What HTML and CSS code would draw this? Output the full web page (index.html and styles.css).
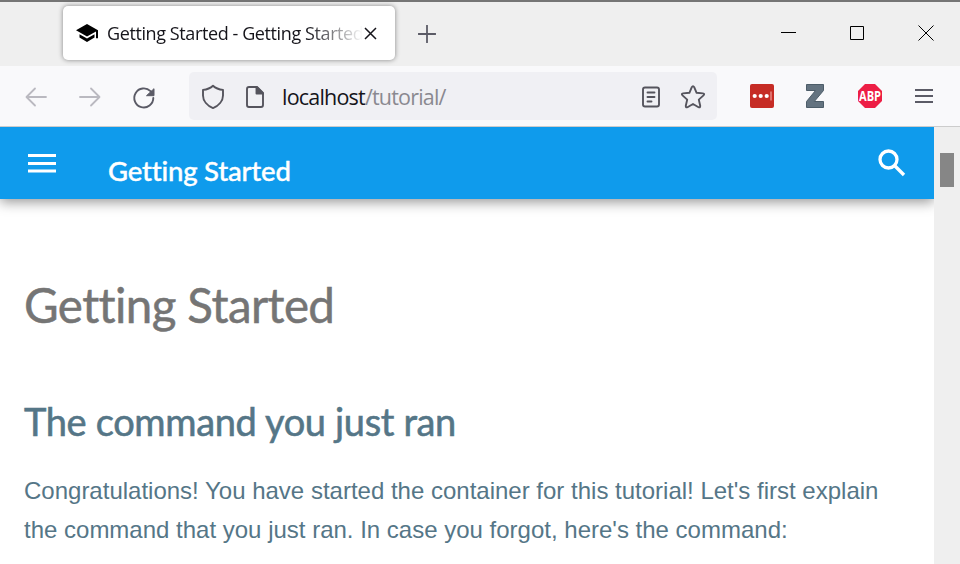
FILE: index.html
```
<!DOCTYPE html>
<html lang="en">
<head>
<meta charset="utf-8">
<title>Getting Started</title>
<link rel="stylesheet" href="styles.css">
</head>
<body>
<div class="window">
  <div class="tabs">
    <div class="tab">
      <svg class="cap" width="24" height="22" viewBox="0 0 24 22"><path d="M1 8.2 12 2l11 6.2v8h-2V9.6L12 14.400z"/><path d="M4.500 12.200v3.400L12 20l7.500-4.400v-3.400L12 16.500z"/></svg>
      <span class="tab-title">Getting Started - Getting Started</span>
      <svg class="tab-close" width="13" height="13" viewBox="0 0 13 13"><path d="M1 1l11 11M12 1L1 12"/></svg>
    </div>
    <svg class="plus" width="18" height="18" viewBox="0 0 18 18"><path d="M9 .5v17M.5 9h17"/></svg>
    <div class="controls">
      <svg width="16" height="16" viewBox="0 0 16 16"><path d="M0 7.500h15"/></svg>
      <svg width="14" height="14" viewBox="0 0 14 14"><path d="M.5.5h13v13H.5z"/></svg>
      <svg width="16" height="16" viewBox="0 0 16 16"><path d="M.5.5l15 15M15.500.5l-15 15"/></svg>
    </div>
  </div>

  <div class="toolbar">
    <svg class="nav-arrow" width="22" height="20" viewBox="0 0 22 20"><path d="M10 1.500L1.500 10l8.500 8.500M2 10h19"/></svg>
    <svg class="nav-arrow forward" width="22" height="20" viewBox="0 0 22 20"><path d="M12 1.500l8.500 8.500-8.500 8.500M20 10H1"/></svg>
    <svg class="reload" width="24" height="24" viewBox="0 0 24 24"><path class="line" d="M21.300 12A9.500 9.500 0 1 1 18.500 5.200l1 1"/><path class="solid" d="M22 2.700v7h-7.500z"/></svg>
    <div class="urlbar">
      <svg class="ui" width="24" height="26" viewBox="0 0 24 26"><path d="M12 1.700C9 4.500 5.500 5.500 2 5.900v5.600c0 5.500 4.300 10.300 10 12.600 5.700-2.300 10-7.100 10-12.600V5.900C18.500 5.500 15 4.500 12 1.700z"/></svg>
      <svg class="ui page" width="20" height="24" viewBox="0 0 20 24"><path d="M4 2h8l6 6v12a2 2 0 0 1-2 2H4a2 2 0 0 1-2-2V4a2 2 0 0 1 2-2z"/><path class="solid" d="M11.500 2v6.500H18z"/></svg>
      <span class="address">localhost<span class="path">/tutorial/</span></span>
      <svg class="ui reader" width="20" height="24" viewBox="0 0 20 24"><rect x="2" y="2.500" width="16" height="19" rx="2"/><path d="M6.500 7.500h7M6.500 12h7M6.500 16.500h4"/></svg>
      <svg class="ui" width="26" height="26" viewBox="0 0 26 26"><path d="M11.800 3.200q1.200-2.200 2.400 0l2.400 5.600 6.300.6q2.200.4.6 2l-4.700 4.200 1.400 6.200q.2 2.200-1.700 1.400L13 20l-5.500 3.200q-1.900.8-1.700-1.400l1.400-6.200-4.700-4.200q-1.600-1.600.6-2l6.300-.6z"/></svg>
    </div>
    <svg class="pass" width="24" height="24" viewBox="0 0 24 24"><rect width="24" height="24" rx="2" fill="#c62c25"/><g fill="#fff"><circle cx="4.700" cy="12" r="2.100"/><circle cx="10.700" cy="12" r="2.100"/><circle cx="16.700" cy="12" r="2.100"/></g><path d="M21 7.500v9" stroke="#ed9995" stroke-width="1.300"/></svg>
    <svg class="zed" width="18" height="24" viewBox="0 0 18 24"><path d="M.5.5h17v6L8.300 17.500h9.200v6H.5v-6L9.500 6.500h-9z" fill="#647380" stroke="#4d5d69"/></svg>
    <svg class="abp" width="24" height="24" viewBox="0 0 24 24"><path d="M7 0h10l7 7v10l-7 7H7l-7-7V7z" fill="#ed1e45"/><text x="1" y="17" textLength="22" lengthAdjust="spacingAndGlyphs">ABP</text></svg>
    <svg class="menu" width="18" height="16" viewBox="0 0 18 16"><path d="M0 2h18M0 8h18M0 14h18"/></svg>
  </div>

  <div class="viewport">
    <main>
      <header>
        <svg width="28" height="19" viewBox="0 0 28 19"><path d="M0 0h28v3H0zM0 8h28v3H0zM0 15.500h28v3H0z" fill="#fff"/></svg>
        <span class="site-title">Getting Started</span>
        <svg class="search" width="28" height="28" viewBox="0 0 28 28"><circle cx="10.500" cy="10.500" r="8.500"/><path d="M16.500 16.500l9.500 9.500"/></svg>
      </header>
      <article>
        <h1>Getting Started</h1>
        <h2>The command you just ran</h2>
        <p>Congratulations! You have started the container for this tutorial! Let's first explain<br>the command that you just ran. In case you forgot, here's the command:</p>
      </article>
    </main>
    <div class="scrollbar"><div class="thumb"></div></div>
  </div>
</div>
</body>
</html>
```
FILE: styles.css
```
* { box-sizing: border-box; }
body { margin: 0; }
svg { display: block; flex: none; fill: none; }
.window { width: 960px; height: 564px; overflow: hidden; display: flex; flex-direction: column; background: #fff; }

.tabs { flex: none; height: 66px; border-top: 2px solid #757575; background: #efefef; padding: 4px 26px 6px 63px; display: flex; align-items: center; }
.tab { width: 332px; height: 54px; border-radius: 5px; background: #fff; box-shadow: 0 0 5px rgba(0,0,0,.45); display: flex; align-items: center; padding: 0 18px 0 12px; }
.cap { fill: #000; }
.tab-title { margin-left: 8px; width: 256px; overflow: hidden; white-space: nowrap; font: 18px/30px "Open Sans", sans-serif; letter-spacing: -.4px; color: #15141a; -webkit-mask-image: linear-gradient(90deg, #000 78%, transparent 100%); mask-image: linear-gradient(90deg, #000 78%, transparent 100%); }
.tab-close { margin-left: 1px; stroke: #15141a; stroke-width: 1.500; }
.plus { margin-left: 23px; margin-top: 2px; stroke: #5b5b66; stroke-width: 1.800; stroke-linecap: round; }
.controls { margin-left: auto; display: flex; align-items: center; gap: 53px; stroke: #000; stroke-width: 1; }
.controls svg:nth-child(-n+2) { margin-right: 1px; margin-left: -1px; }

.toolbar { flex: none; height: 61px; border-bottom: 1px solid #ccc; background: #f9f9fb; display: flex; align-items: center; padding: 0 27px 0 25px; }
.nav-arrow { stroke: #bab9c0; stroke-width: 1.800; stroke-linecap: round; stroke-linejoin: round; margin-top: 2px; }
.forward { margin-left: 32px; }
.reload { margin-left: 31px; margin-top: 3px; }
.reload .line { stroke: #5b5b66; stroke-width: 1.900; stroke-linecap: round; }
.reload .solid { fill: #5b5b66; stroke: #5b5b66; stroke-linejoin: round; }
.urlbar { margin-left: 33px; width: 528px; height: 48px; border-radius: 5px; background: #f0f0f4; display: flex; align-items: center; padding: 1px 11px 0 12px; }
.ui { stroke: #55545d; stroke-width: 1.900; stroke-linecap: round; stroke-linejoin: round; }
.ui .solid { fill: #55545d; }
.page { margin-left: 20px; }
.address { margin-left: 17px; font: 21.500px/32px "Open Sans", sans-serif; letter-spacing: -.8px; color: #15141a; white-space: nowrap; }
.path { color: #8a8990; }
.reader { margin-left: auto; margin-right: 19px; }
.pass { margin-left: 33px; }
.zed { margin-left: 32px; margin-right: 1px; }
.abp { margin-left: 33px; overflow: visible; }
.abp text { font: bold 14px "Open Sans", sans-serif; fill: #fff; }
.menu { margin-left: 33px; stroke: #5b5b66; stroke-width: 1.900; stroke-linecap: round; }

.viewport { flex: 1; min-height: 0; display: flex; }
main { width: 934px; overflow: hidden; }
header { height: 72px; background: #0f9bec; box-shadow: 0 3px 12px rgba(0,0,0,.42); display: flex; align-items: center; padding: 0 28px; }
.site-title { margin-left: 52px; margin-top: 15px; font: 500 27.500px/34px Lato, sans-serif; letter-spacing: -.2px; color: #fff; white-space: nowrap; -webkit-text-stroke: .4px currentColor; }
.search { margin-left: auto; stroke: #fff; stroke-width: 3.300; }
article { padding: 76px 24px 0; }
h1 { margin: 0; font: 400 47.500px/60px Lato, sans-serif; letter-spacing: -.6px; color: #757575; -webkit-text-stroke: .5px currentColor; white-space: nowrap; }
h2 { margin: 61px 0 0; font: 400 38px/50px Lato, sans-serif; letter-spacing: -.35px; color: #557687; -webkit-text-stroke: .6px currentColor; white-space: nowrap; }
p { margin: 25px 0 0; font: 24px/39px "Liberation Sans", sans-serif; color: #557687; white-space: nowrap; }
.scrollbar { width: 26px; background: #efefef; padding: 26px 6px 0; }
.thumb { height: 34px; background: #868686; }
```
